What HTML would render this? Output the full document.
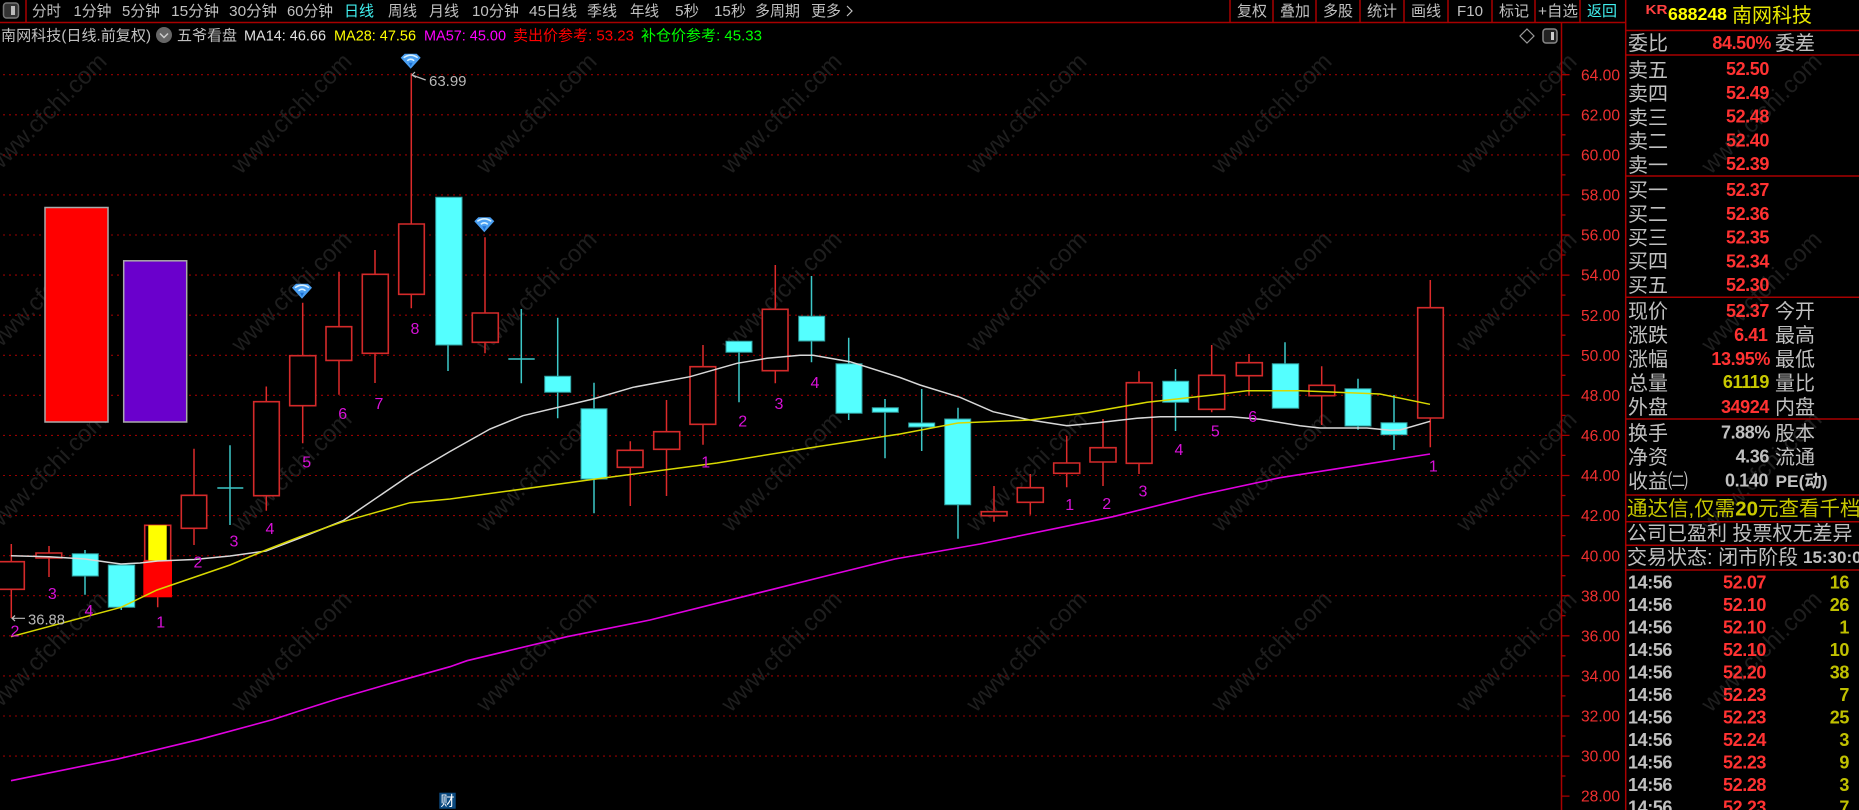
<!DOCTYPE html>
<html><head><meta charset="utf-8"><title>南网科技</title>
<style>
html,body{margin:0;padding:0;background:#000;width:1859px;height:810px;overflow:hidden}
svg{display:block}
text{font-family:"Liberation Sans","Noto Sans CJK SC",sans-serif}
.w text{font-size:24px;fill:#1e1e1e;text-anchor:middle}
.t text{font-size:15px;fill:#c0c0c0}
.ax text{font-size:15.6px;fill:#f03030}
.n text{font-size:16px;fill:#d811d8;text-anchor:middle}
.l text{font-size:20px;fill:#c0c0c0}
.v text{font-size:18px;letter-spacing:-.4px;font-weight:bold;fill:#ff3232;text-anchor:end}
.g{font-size:17px;font-weight:bold;fill:#c0c0c0}
.tm text{font-size:18px;letter-spacing:-.4px;font-weight:bold;fill:#c0c0c0}
.pr text{font-size:18px;letter-spacing:-.4px;font-weight:bold;fill:#ff3232}
.vo text{font-size:18px;letter-spacing:-.4px;font-weight:bold;fill:#c0c000;text-anchor:end}
</style></head><body>
<svg xmlns="http://www.w3.org/2000/svg" width="1859" height="810" viewBox="0 0 1859 810">
<defs><g id="d"><path d="M-10-3-6-7H6L10-3 0 8Z" fill="#4a9ff2"/><path d="M-7-3Q0-8 7-3M-3.5 0Q0-3 3.5 0" fill="none" stroke="#d8f2ff" stroke-width="1.5"/><path d="M-2 2 0 6 2 2Z" fill="#1c6fd0"/></g></defs>
<rect width="1859" height="810" fill="#000"/>

<g class="w">
<text x="52" y="119" transform="rotate(-45 52 119)">www.cfchi.com</text><text x="297" y="119" transform="rotate(-45 297 119)">www.cfchi.com</text><text x="542" y="119" transform="rotate(-45 542 119)">www.cfchi.com</text><text x="787" y="119" transform="rotate(-45 787 119)">www.cfchi.com</text><text x="1032" y="119" transform="rotate(-45 1032 119)">www.cfchi.com</text><text x="1277" y="119" transform="rotate(-45 1277 119)">www.cfchi.com</text><text x="1522" y="119" transform="rotate(-45 1522 119)">www.cfchi.com</text><text x="1767" y="119" transform="rotate(-45 1767 119)">www.cfchi.com</text>
<text x="52" y="297" transform="rotate(-45 52 297)">www.cfchi.com</text><text x="297" y="297" transform="rotate(-45 297 297)">www.cfchi.com</text><text x="542" y="297" transform="rotate(-45 542 297)">www.cfchi.com</text><text x="787" y="297" transform="rotate(-45 787 297)">www.cfchi.com</text><text x="1032" y="297" transform="rotate(-45 1032 297)">www.cfchi.com</text><text x="1277" y="297" transform="rotate(-45 1277 297)">www.cfchi.com</text><text x="1522" y="297" transform="rotate(-45 1522 297)">www.cfchi.com</text><text x="1767" y="297" transform="rotate(-45 1767 297)">www.cfchi.com</text>
<text x="52" y="477" transform="rotate(-45 52 477)">www.cfchi.com</text><text x="297" y="477" transform="rotate(-45 297 477)">www.cfchi.com</text><text x="542" y="477" transform="rotate(-45 542 477)">www.cfchi.com</text><text x="787" y="477" transform="rotate(-45 787 477)">www.cfchi.com</text><text x="1032" y="477" transform="rotate(-45 1032 477)">www.cfchi.com</text><text x="1277" y="477" transform="rotate(-45 1277 477)">www.cfchi.com</text><text x="1522" y="477" transform="rotate(-45 1522 477)">www.cfchi.com</text><text x="1767" y="477" transform="rotate(-45 1767 477)">www.cfchi.com</text>
<text x="52" y="657" transform="rotate(-45 52 657)">www.cfchi.com</text><text x="297" y="657" transform="rotate(-45 297 657)">www.cfchi.com</text><text x="542" y="657" transform="rotate(-45 542 657)">www.cfchi.com</text><text x="787" y="657" transform="rotate(-45 787 657)">www.cfchi.com</text><text x="1032" y="657" transform="rotate(-45 1032 657)">www.cfchi.com</text><text x="1277" y="657" transform="rotate(-45 1277 657)">www.cfchi.com</text><text x="1522" y="657" transform="rotate(-45 1522 657)">www.cfchi.com</text><text x="1767" y="657" transform="rotate(-45 1767 657)">www.cfchi.com</text>
</g>

<!-- grid -->
<path d="M3 74.7H1561M3 114.8H1561M3 154.9H1561M3 194.9H1561M3 235H1561M3 275.1H1561M3 315.2H1561M3 355.3H1561M3 395.3H1561M3 435.4H1561M3 475.5H1561M3 515.6H1561M3 555.7H1561M3 595.7H1561M3 635.8H1561M3 675.9H1561M3 716H1561M3 756.1H1561" stroke="#980000" stroke-width="1.1" stroke-dasharray="2 4" fill="none"/>

<!-- side blocks -->
<rect x="45" y="207.5" width="63" height="214.5" fill="#ff0000" stroke="#aaa" stroke-width="1.5"/>
<rect x="123.7" y="260.8" width="63" height="161.2" fill="#6a00cc" stroke="#aaa" stroke-width="1.5"/>

<!-- cyan candles -->
<path d="M85 550V594.7M121.3 607V610M230 445.3V525M448 345V371M521.3 309V383.3M557.7 317.7V418.3M594 382.7V513.3M739 352V402.3M811.5 276V362.3M848.7 337.7V420M885 399V458.3M921.7 389V451M958 407.7V538.7M1175.5 369V431M1285 342.3V408M1358 378.7V429.7M1394 395V450M217.3 488H243.3M508.3 359H534.7" stroke="#3cc8c8" stroke-width="1.5" fill="none"/>
<path d="M72.3 553.7H98.3V576H72.3ZM108.3 565H134.7V607.3H108.3ZM435.7 197.3H462V345H435.7ZM544.7 376.3H570.7V392.3H544.7ZM581 408.7H607V479H581ZM726 341.3H752V352.3H726ZM798.7 316.3H824.7V341H798.7ZM836 363.7H862V413.3H836ZM872.3 407.7H898.3V412.3H872.3ZM908.7 423H934.7V427H908.7ZM944.7 419H970.7V504.7H944.7ZM1162.7 381.3H1188.7V402.3H1162.7ZM1272.3 363.7H1298.7V408.3H1272.3ZM1345 388.7H1371V426H1345ZM1381 422.7H1407V434.7H1381Z" fill="#54ffff" stroke="#2f9e9e" stroke-width="1"/>

<!-- red candles -->
<path d="M11.3 544V618M49 546V577M157.7 597V607.3M194 448.7V545M266.3 386.5V510.7M302.7 302.7V443.3M339 271.7V394.8M375 250V383M411.3 73.3V308.3M485 237.3V353.3M630.3 441.3V506M666.5 400V496M703 345V444.7M775.3 265V383.3M994 486V521.7M1030.3 474V514.7M1066.7 436V487.3M1103 419V486M1139 371.3V474M1211.7 345V412.3M1249 354V395.7M1321.7 366.3V425M1430.3 280V447.3" stroke="#dc2a2a" stroke-width="1.5" fill="none"/>
<path d="M-2 561.7H24.3V589.3H-2ZM36 553H61.7V558H36ZM144.7 525.3H170.7V560.7H144.7ZM181.3 495.3H206.7V528.3H181.3ZM253.7 401.7H279.3V495.7H253.7ZM289.7 355.7H315.7V405.7H289.7ZM326 326.7H351.7V360.4H326ZM362.3 274.3H388.3V353.3H362.3ZM398.7 224H424.3V294.3H398.7ZM472.3 313H498.3V342.3H472.3ZM617.3 450.3H643V467.3H617.3ZM653.7 431.7H679.7V449.3H653.7ZM690 366.7H715.7V424.3H690ZM762.3 309.3H788V370.7H762.3ZM981.3 511.7H1007V515.7H981.3ZM1017.3 487.7H1043.3V502.3H1017.3ZM1053.7 463H1079.7V473.3H1053.7ZM1090 447.7H1116V462H1090ZM1126.3 382.7H1152V463.3H1126.3ZM1198.7 375.3H1224.7V409.3H1198.7ZM1236.3 362.7H1262.3V375.7H1236.3ZM1309 385.3H1334.7V395.7H1309ZM1417.7 307.7H1443.3V418H1417.7Z" fill="#000" stroke="#d42a2a" stroke-width="1.6"/>
<rect x="148.3" y="525.3" width="18.4" height="35.4" fill="#ffff00"/>
<rect x="143.3" y="560.7" width="28.7" height="36.6" fill="#ff0000"/>

<!-- MA lines -->
<polyline fill="none" stroke="#d8d8d8" stroke-width="1.5" points="11,555.7 49,556.7 85,559 108,562.3 121,564 140,563 157.7,561 194,559.5 230,556 266,551 300,538 343,520.7 410,475 450,451.5 490,429 523,415.7 593,399 633,387.3 690,376.7 737,363.3 767,358.3 800,355.3 813,355.3 850,361.7 900,377.5 920,385 960,397.3 993,411.7 1030,420 1067,425.7 1093,423.3 1137,418.3 1160,416.7 1231,416.7 1260,419.3 1300,425.7 1320,428 1367,428 1390,430.3 1400,430 1430,421.3"/>
<polyline fill="none" stroke="#d8d800" stroke-width="1.5" points="11,636.7 121,607.3 157,590 230,565 266,550 300,536.7 343,521.7 410,502.7 450,499 594,479.3 717,463 817,446.7 900,434 958,423 1030,420 1087,412.7 1147,402.3 1213,395 1247,390.7 1300,390.7 1380,394 1430,404.3"/>
<polyline fill="none" stroke="#e000e0" stroke-width="1.6" points="11,780.7 118.6,758.8 200,739.3 272.7,719.6 300,710.7 337,699 400,680.7 450,666.7 467,660.7 567,636.7 650,620 830,575 895,559 980,544 1113,516.7 1200,495 1280,477.7 1350,466.7 1430,454"/>

<!-- wave numbers -->
<g class="n">
<text x="15" y="636.5">2</text><text x="52.3" y="599">3</text><text x="89" y="616">4</text><text x="160.7" y="627.5">1</text><text x="198" y="567.5">2</text><text x="234" y="546.5">3</text><text x="270" y="534">4</text><text x="306.7" y="467.5">5</text><text x="342.7" y="419">6</text><text x="379" y="409">7</text><text x="415" y="334">8</text><text x="705.7" y="467.5">1</text><text x="742.7" y="426.5">2</text><text x="779" y="409">3</text><text x="815" y="388">4</text><text x="1069.7" y="510">1</text><text x="1106.7" y="509">2</text><text x="1143" y="496.5">3</text><text x="1179" y="455">4</text><text x="1215.3" y="436.5">5</text><text x="1252.7" y="422">6</text><text x="1433.3" y="471.5">1</text>
</g>

<!-- extremes -->
<path d="M25 618.3H12M15 615.5 12 618.3 15 621M425.7 80 412 75M415 72 412 75 416 77.5" fill="none" stroke="#bbb" stroke-width="1.2"/>
<text x="28" y="624.5" font-size="15" fill="#b8b8b8" textLength="37" lengthAdjust="spacingAndGlyphs">36.88</text>
<text x="429" y="86" font-size="15" fill="#b8b8b8" textLength="37.5" lengthAdjust="spacingAndGlyphs">63.99</text>
<use href="#d" x="410.7" y="60.7"/><use href="#d" x="484.3" y="224.3"/><use href="#d" x="302" y="290.7"/>

<!-- 财 -->
<rect x="439.3" y="792.7" width="16.4" height="16" fill="#0b4a80"/>
<text x="440.5" y="806" font-size="14" fill="#fff">财</text>

<!-- structure lines -->
<path d="M0 22.5H1625.7M26 0V22M1230 0V22M1273 0V22M1316 0V22M1360 0V22M1404 0V22M1448 0V22M1492 0V22M1535 0V22M1580 0V22M1561.5 22V810M1625.7 0V810M1625.7 30.5H1859M1625.7 55H1859M1625.7 176H1859M1625.7 297.3H1859M1625.7 419H1859M1625.7 495H1859M1625.7 521.7H1859M1625.7 545.3H1859M1625.7 570H1859" stroke="#a80000" stroke-width="1.5" fill="none"/>
<path d="M1561.5 74.7h8M1561.5 114.8h8M1561.5 154.9h8M1561.5 194.9h8M1561.5 235h8M1561.5 275.1h8M1561.5 315.2h8M1561.5 355.3h8M1561.5 395.3h8M1561.5 435.4h8M1561.5 475.5h8M1561.5 515.6h8M1561.5 555.7h8M1561.5 595.7h8M1561.5 635.8h8M1561.5 675.9h8M1561.5 716h8M1561.5 756.1h8M1561.5 796.1h8M1561.5 94.7h4M1561.5 134.8h4M1561.5 174.9h4M1561.5 215h4M1561.5 255h4M1561.5 295.1h4M1561.5 335.2h4M1561.5 375.3h4M1561.5 415.4h4M1561.5 455.4h4M1561.5 495.5h4M1561.5 535.6h4M1561.5 575.7h4M1561.5 615.7h4M1561.5 655.8h4M1561.5 695.9h4M1561.5 736h4M1561.5 776h4" stroke="#a80000" stroke-width="1.3" fill="none"/>

<!-- axis labels -->
<g class="ax">
<text x="1581" y="80.3">64.00</text><text x="1581" y="120.4">62.00</text><text x="1581" y="160.5">60.00</text><text x="1581" y="200.5">58.00</text><text x="1581" y="240.6">56.00</text><text x="1581" y="280.7">54.00</text><text x="1581" y="320.8">52.00</text><text x="1581" y="360.9">50.00</text><text x="1581" y="400.9">48.00</text><text x="1581" y="441">46.00</text><text x="1581" y="481.1">44.00</text><text x="1581" y="521.2">42.00</text><text x="1581" y="561.3">40.00</text><text x="1581" y="601.3">38.00</text><text x="1581" y="641.4">36.00</text><text x="1581" y="681.5">34.00</text><text x="1581" y="721.6">32.00</text><text x="1581" y="761.7">30.00</text><text x="1581" y="801.7">28.00</text>
</g>

<!-- left top icon -->
<rect x="3.5" y="3" width="15" height="15" rx="3" fill="#333" stroke="#777" stroke-width="1.5"/>
<rect x="11" y="6" width="4" height="9" fill="#bbb"/>
<!-- right chart icons -->
<path d="M1527 29 1534 36 1527 43 1520 36Z" fill="none" stroke="#999" stroke-width="1.2"/>
<rect x="1543" y="29" width="14" height="14" rx="3" fill="#222" stroke="#888" stroke-width="1.5"/>
<rect x="1551" y="32" width="3" height="8" fill="#ccc"/>

<!-- tabs -->
<g class="t">
<text x="32" y="16" textLength="29" lengthAdjust="spacingAndGlyphs">分时</text>
<text x="73.5" y="16" textLength="38" lengthAdjust="spacingAndGlyphs">1分钟</text>
<text x="122" y="16" textLength="38" lengthAdjust="spacingAndGlyphs">5分钟</text>
<text x="171" y="16" textLength="48" lengthAdjust="spacingAndGlyphs">15分钟</text>
<text x="229" y="16" textLength="48" lengthAdjust="spacingAndGlyphs">30分钟</text>
<text x="287" y="16" textLength="46" lengthAdjust="spacingAndGlyphs">60分钟</text>
<text x="344" y="16" textLength="30" lengthAdjust="spacingAndGlyphs" style="fill:#40f0f0">日线</text>
<text x="388" y="16" textLength="29" lengthAdjust="spacingAndGlyphs">周线</text>
<text x="429" y="16" textLength="30" lengthAdjust="spacingAndGlyphs">月线</text>
<text x="472" y="16" textLength="47" lengthAdjust="spacingAndGlyphs">10分钟</text>
<text x="529" y="16" textLength="48" lengthAdjust="spacingAndGlyphs">45日线</text>
<text x="587" y="16" textLength="30" lengthAdjust="spacingAndGlyphs">季线</text>
<text x="630" y="16" textLength="29" lengthAdjust="spacingAndGlyphs">年线</text>
<text x="675" y="16" textLength="24" lengthAdjust="spacingAndGlyphs">5秒</text>
<text x="714" y="16" textLength="32" lengthAdjust="spacingAndGlyphs">15秒</text>
<text x="755" y="16" textLength="45" lengthAdjust="spacingAndGlyphs">多周期</text>
<text x="811" y="16" textLength="30" lengthAdjust="spacingAndGlyphs">更多</text>
<text x="1237" y="16">复权</text><text x="1280" y="16">叠加</text><text x="1323" y="16">多股</text><text x="1367" y="16">统计</text><text x="1411" y="16">画线</text>
<text x="1457" y="16" textLength="26" lengthAdjust="spacingAndGlyphs">F10</text>
<text x="1499" y="16">标记</text>
<text x="1538" y="16" textLength="40" lengthAdjust="spacingAndGlyphs">+自选</text>
<text x="1587" y="16" style="fill:#40f0f0">返回</text>
</g>
<path d="M847 6 852 11 847 16" fill="none" stroke="#c0c0c0" stroke-width="1.2"/>

<!-- title row -->
<g class="t">
<text x="1" y="40.5" textLength="150" lengthAdjust="spacingAndGlyphs">南网科技(日线.前复权)</text>
<text x="177" y="40.5" textLength="60" lengthAdjust="spacingAndGlyphs">五爷看盘</text>
<text x="244" y="40.5" textLength="82" lengthAdjust="spacingAndGlyphs" style="fill:#e0e0e0">MA14: 46.66</text>
<text x="334" y="40.5" textLength="82" lengthAdjust="spacingAndGlyphs" style="fill:#ffff00">MA28: 47.56</text>
<text x="424" y="40.5" textLength="82" lengthAdjust="spacingAndGlyphs" style="fill:#ff00ff">MA57: 45.00</text>
<text x="513" y="40.5" textLength="121" lengthAdjust="spacingAndGlyphs" style="fill:#ff0000">卖出价参考: 53.23</text>
<text x="641" y="40.5" textLength="121" lengthAdjust="spacingAndGlyphs" style="fill:#00ff00">补仓价参考: 45.33</text>
</g>
<circle cx="164" cy="35" r="8" fill="#666"/><path d="M160 33.5l4 4 4-4" fill="none" stroke="#ccc" stroke-width="1.5"/>

<!-- right panel header -->
<text x="1645.5" y="14" font-size="13" font-weight="bold" fill="#ff4040" textLength="22" lengthAdjust="spacingAndGlyphs">KR</text>
<text x="1668" y="20" font-size="17.5" font-weight="bold" fill="#ffff00" textLength="59" lengthAdjust="spacingAndGlyphs">688248</text>
<text x="1732" y="22" font-size="20" fill="#e8e800">南网科技</text>

<g class="l">
<text x="1628" y="50">委比</text><text x="1775" y="50">委差</text>
<text x="1628" y="77">卖五</text><text x="1628" y="100.5">卖四</text><text x="1628" y="124.5">卖三</text><text x="1628" y="148">卖二</text><text x="1628" y="172">卖一</text>
<text x="1628" y="197">买一</text><text x="1628" y="221">买二</text><text x="1628" y="244.5">买三</text><text x="1628" y="268">买四</text><text x="1628" y="292">买五</text>
<text x="1628" y="318">现价</text><text x="1775" y="318">今开</text>
<text x="1628" y="342">涨跌</text><text x="1775" y="342">最高</text>
<text x="1628" y="366">涨幅</text><text x="1775" y="366">最低</text>
<text x="1628" y="390">总量</text><text x="1775" y="390">量比</text>
<text x="1628" y="414">外盘</text><text x="1775" y="414">内盘</text>
<text x="1628" y="440">换手</text><text x="1775" y="440">股本</text>
<text x="1628" y="464">净资</text><text x="1775" y="464">流通</text>
<text x="1628" y="488">收益㈡</text>
<text x="1627" y="515.5" style="fill:#c8c800;font-size:20.5px">通达信,仅需<tspan font-weight="bold">20</tspan>元查看千档行情</text>
<text x="1627" y="540">公司已盈利 投票权无差异</text>
<text x="1627" y="564">交易状态: 闭市阶段</text>
</g>
<text x="1803" y="563" class="g">15:30:00</text>
<text x="1775.5" y="487" class="g" textLength="52" lengthAdjust="spacingAndGlyphs">PE(动)</text>

<g class="v">
<text x="1771" y="49">84.50%</text>
<text x="1769" y="75">52.50</text><text x="1769" y="98.8">52.49</text><text x="1769" y="122.5">52.48</text><text x="1769" y="146.3">52.40</text><text x="1769" y="170">52.39</text>
<text x="1769" y="196">52.37</text><text x="1769" y="219.8">52.36</text><text x="1769" y="243.5">52.35</text><text x="1769" y="267.3">52.34</text><text x="1769" y="291">52.30</text>
<text x="1769" y="317">52.37</text><text x="1767.5" y="341">6.41</text><text x="1770" y="365">13.95%</text>
<text x="1769" y="388" style="fill:#c8c800">61119</text><text x="1769" y="413">34924</text>
<text x="1770" y="438.7" style="fill:#c0c0c0">7.88%</text><text x="1769" y="462.7" style="fill:#c0c0c0">4.36</text><text x="1768" y="486.7" style="fill:#c0c0c0">0.140</text>
</g>

<g class="tm">
<text x="1628" y="588.7">14:56</text><text x="1628" y="611.2">14:56</text><text x="1628" y="633.7">14:56</text><text x="1628" y="656.2">14:56</text><text x="1628" y="678.7">14:56</text><text x="1628" y="701.2">14:56</text><text x="1628" y="723.7">14:56</text><text x="1628" y="746.2">14:56</text><text x="1628" y="768.7">14:56</text><text x="1628" y="791.2">14:56</text><text x="1628" y="813.7">14:56</text>
</g>
<g class="pr">
<text x="1723" y="588.7">52.07</text><text x="1723" y="611.2">52.10</text><text x="1723" y="633.7">52.10</text><text x="1723" y="656.2">52.10</text><text x="1723" y="678.7">52.20</text><text x="1723" y="701.2">52.23</text><text x="1723" y="723.7">52.23</text><text x="1723" y="746.2">52.24</text><text x="1723" y="768.7">52.23</text><text x="1723" y="791.2">52.28</text><text x="1723" y="813.7">52.23</text>
</g>
<g class="vo">
<text x="1849" y="588.7">16</text><text x="1849" y="611.2">26</text><text x="1849" y="633.7">1</text><text x="1849" y="656.2">10</text><text x="1849" y="678.7">38</text><text x="1849" y="701.2">7</text><text x="1849" y="723.7">25</text><text x="1849" y="746.2">3</text><text x="1849" y="768.7">9</text><text x="1849" y="791.2">3</text><text x="1849" y="813.7">7</text>
</g>
</svg>
</body></html>
